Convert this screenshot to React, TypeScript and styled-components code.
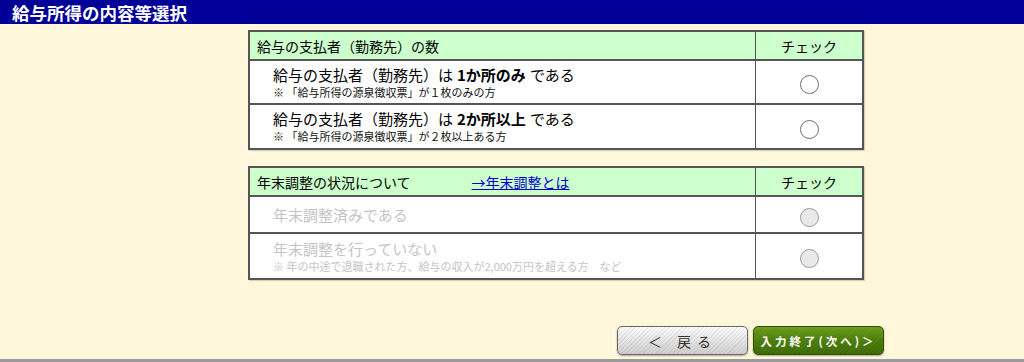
import React from 'react';
import styled, { createGlobalStyle } from 'styled-components';

const GlobalStyle = createGlobalStyle`
  html, body {
    margin: 0;
    padding: 0;
    background: #fff7dc;
  }
  body {
    font-family: "Noto Sans CJK JP", "Noto Sans", sans-serif;
    color: #000;
  }
`;

const Page = styled.div`
  min-height: 362px;
  display: flex;
  flex-direction: column;
  box-sizing: border-box;
  border-bottom: 3px solid #9a9a9a;
`;

const TitleBar = styled.div`
  height: 24px;
  background: #000099;
  display: flex;
  align-items: center;
  padding-left: 12px;
`;

const Title = styled.h1`
  margin: 0;
  font-size: 17.5px;
  font-weight: bold;
  color: #ffffff;
`;

const Content = styled.div`
  width: 636px;
  margin-left: 248px;
  padding-top: 6px;
  display: flex;
  flex-direction: column;
  gap: 16px;
  flex: 1;
`;

const Table = styled.table`
  width: 616px;
  table-layout: fixed;
  border-collapse: collapse;
  border: 2px solid #555;
  box-shadow: 1px 1px 1px rgba(0, 0, 0, 0.15);
  background: #ffffff;
`;

const HeadCell = styled.th<{ $center?: boolean }>`
  background: #ccffcc;
  height: 27px;
  padding: 0 0 0 7px;
  border: 1px solid #555;
  border-bottom-width: 2px;
  font-size: 14px;
  font-weight: normal;
  text-align: ${(p) => (p.$center ? 'center' : 'left')};
  ${(p) => (p.$center ? 'padding: 0; width: 106px;' : '')}
`;

const HelpLink = styled.a`
  color: #0000cc;
  text-decoration: underline;
  margin-left: 61px;
`;

const Cell = styled.td<{ $h: number }>`
  height: ${(p) => p.$h}px;
  padding: 0 0 0 23px;
  border: 1px solid #555;
  border-top-width: 2px;
  vertical-align: middle;
  text-align: left;
`;

const CheckCell = styled.td`
  border: 1px solid #555;
  border-top-width: 2px;
  text-align: center;
  vertical-align: middle;
`;

const Main = styled.div<{ $disabled?: boolean }>`
  font-size: 15px;
  line-height: 18px;
  color: ${(p) => (p.$disabled ? '#c4c4c4' : '#000')};
  b {
    font-weight: bold;
    margin: 0 4px;
  }
`;

const Note = styled.div<{ $disabled?: boolean }>`
  font-size: 11px;
  line-height: 14px;
  margin-top: 1px;
  color: ${(p) => (p.$disabled ? '#c4c4c4' : '#111')};
`;

const Radio = styled.span<{ $disabled?: boolean }>`
  display: inline-block;
  width: 17px;
  height: 17px;
  border-radius: 50%;
  border: 1px solid ${(p) => (p.$disabled ? '#9a9a9a' : '#707070')};
  background: ${(p) => (p.$disabled ? '#e9e9e9' : '#ffffff')};
  vertical-align: middle;
`;

const Buttons = styled.div`
  margin-top: auto;
  margin-bottom: 4px;
  display: flex;
  justify-content: flex-end;
  gap: 5px;
`;

const Button = styled.button<{ $primary?: boolean }>`
  width: 131px;
  height: 29px;
  border-radius: 5px;
  border: 1px solid ${(p) => (p.$primary ? '#2f5200' : '#6a6a6a')};
  font-family: "Noto Sans CJK JP", sans-serif;
  font-weight: ${(p) => (p.$primary ? 'bold' : 'normal')};
  cursor: pointer;
  box-shadow: 0 1px 2px rgba(0, 0, 0, 0.35);
  color: ${(p) => (p.$primary ? '#ffffff' : '#333333')};
  font-size: ${(p) => (p.$primary ? '11.5px' : '14px')};
  letter-spacing: ${(p) => (p.$primary ? '3px' : '6px')};
  background: ${(p) =>
    p.$primary
      ? 'repeating-linear-gradient(135deg, rgba(255,255,255,0.04) 0 1px, rgba(0,0,0,0) 1px 3px), linear-gradient(#6b9a1c, #4a7c0a 50%, #3c6a02)'
      : 'repeating-linear-gradient(135deg, rgba(0,0,0,0.05) 0 1px, rgba(0,0,0,0) 1px 3px), linear-gradient(#fbfbfb, #e4e4e4 50%, #cfcfcf)'};
  padding: 0;
`;

type Option = {
  main: React.ReactNode;
  note?: string;
  h: number;
};

const first: Option[] = [
  {
    main: (
      <>
        給与の支払者（勤務先）は<b>1か所のみ</b>である
      </>
    ),
    note: '※ 「給与所得の源泉徴収票」が１枚のみの方',
    h: 42,
  },
  {
    main: (
      <>
        給与の支払者（勤務先）は<b>2か所以上</b>である
      </>
    ),
    note: '※ 「給与所得の源泉徴収票」が２枚以上ある方',
    h: 43,
  },
];

const second: Option[] = [
  { main: '年末調整済みである', h: 35 },
  {
    main: '年末調整を行っていない',
    note: '※ 年の中途で退職された方、給与の収入が2,000万円を超える方　など',
    h: 44,
  },
];

const OptionTable: React.FC<{ head: React.ReactNode; rows: Option[]; disabled?: boolean }> = ({
  head,
  rows,
  disabled,
}) => (
  <Table>
    <thead>
      <tr>
        <HeadCell>{head}</HeadCell>
        <HeadCell $center>チェック</HeadCell>
      </tr>
    </thead>
    <tbody>
      {rows.map((r, i) => (
        <tr key={i}>
          <Cell $h={r.h}>
            <Main $disabled={disabled}>{r.main}</Main>
            {r.note && <Note $disabled={disabled}>{r.note}</Note>}
          </Cell>
          <CheckCell>
            <Radio $disabled={disabled} />
          </CheckCell>
        </tr>
      ))}
    </tbody>
  </Table>
);

export default function App() {
  return (
    <Page>
      <GlobalStyle />
      <TitleBar>
        <Title>給与所得の内容等選択</Title>
      </TitleBar>
      <Content>
        <OptionTable head="給与の支払者（勤務先）の数" rows={first} />
        <OptionTable
          head={
            <>
              年末調整の状況について
              <HelpLink href="#">→年末調整とは</HelpLink>
            </>
          }
          rows={second}
          disabled
        />
        <Buttons>
          <Button>＜ 戻る</Button>
          <Button $primary>入力終了(次へ)＞</Button>
        </Buttons>
      </Content>
    </Page>
  );
}
